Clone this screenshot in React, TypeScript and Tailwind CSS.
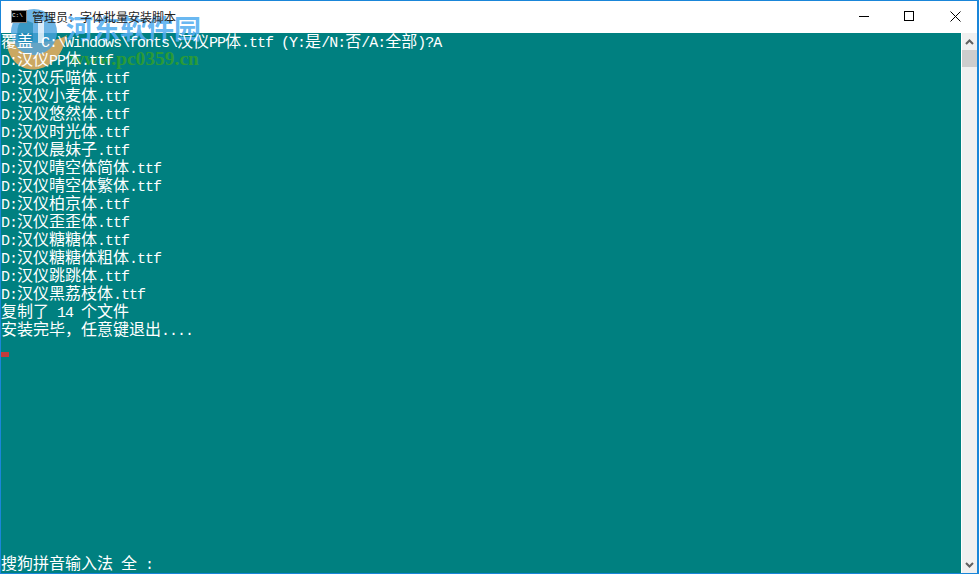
const lines = [
  "覆盖 C:\\Windows\\fonts\\汉仪PP体.ttf (Y:是/N:否/A:全部)?A",
  "D:汉仪PP体.ttf",
  "D:汉仪乐喵体.ttf",
  "D:汉仪小麦体.ttf",
  "D:汉仪悠然体.ttf",
  "D:汉仪时光体.ttf",
  "D:汉仪晨妹子.ttf",
  "D:汉仪晴空体简体.ttf",
  "D:汉仪晴空体繁体.ttf",
  "D:汉仪柏京体.ttf",
  "D:汉仪歪歪体.ttf",
  "D:汉仪糖糖体.ttf",
  "D:汉仪糖糖体粗体.ttf",
  "D:汉仪跳跳体.ttf",
  "D:汉仪黑荔枝体.ttf",
  "复制了 14 个文件",
  "安装完毕\uFF0C任意键退出....",
];

// console cells: latin is 8px wide, cjk 16px, so they need different font sizes
function ConsoleText({ text }: { text: string }) {
  const parts = text.match(/[\u2E80-\uFFEF]+|[^\u2E80-\uFFEF]+/g) ?? [];
  return (
    <>
      {parts.map((part, i) =>
        /[\u2E80-\uFFEF]/.test(part) ? (
          <span key={i} className="text-[16px] font-['Noto_Sans_CJK_SC',monospace]">{part}</span>
        ) : (
          <span key={i} className="text-[15px] tracking-[-1px]">{part}</span>
        )
      )}
    </>
  );
}

// sits above the backgrounds but below the console text
function Watermark() {
  return (
    <div className="absolute left-0 top-0 z-[1] pointer-events-none">
      <svg width="70" height="72" viewBox="0 0 70 72" className="absolute left-0 top-0">
        <path d="M6 40 C6 76 56 82 66 34 C56 42 20 44 6 40Z" fill="#cba862" />
        <circle cx="33" cy="31" r="23" fill="#4aa3df" opacity="0.8" />
        <path d="M22 18 A17 17 0 0 0 24 45 L32 40 L32 22Z" fill="#0f7fa8" opacity="0.55" />
        <path d="M37 20 h6 v22 h-6z" fill="#ffffff" opacity="0.75" />
      </svg>
      <span className="absolute left-[65px] top-[10px] whitespace-nowrap text-[27px] leading-[34px] font-bold text-[#55aef0]/90 font-['Noto_Sans_CJK_SC',sans-serif]">河东软件园</span>
      <span className="absolute left-[69px] top-[46px] whitespace-nowrap text-[19.5px] leading-[24px] font-bold text-[#2a9a38] font-['Liberation_Serif',serif]">www.pc0359.cn</span>
    </div>
  );
}

export default function App() {
  return (
    <div className="relative flex h-[574px] w-[979px] flex-col overflow-hidden border-t border-l border-b border-r-2 border-[#1a86d9] bg-white">
      <div className="flex h-[32px] shrink-0 items-center bg-white">
        <div className="relative z-10 ml-[10px] mr-[5px] mb-[1px] flex h-[13px] w-[16px] items-start border border-[#8a8a8a] bg-black">
          <span className="text-[6px] leading-[10px] text-white font-['Liberation_Mono',monospace]">C:\</span>
        </div>
        <span className="relative z-10 text-[12px] text-[#222] font-['Noto_Sans_CJK_SC',sans-serif]">管理员{"\uFF1A"}字体批量安装脚本</span>
        <div className="ml-auto flex h-full items-center pb-[2px]">
          <div className="flex h-full w-[46px] items-center justify-center">
            <div className="h-px w-[10px] bg-black" />
          </div>
          <div className="flex h-full w-[46px] items-center justify-center pr-[2px]">
            <div className="h-[10px] w-[10px] border border-black" />
          </div>
          <div className="flex h-full w-[44px] items-center justify-center">
            <svg width="11" height="11" viewBox="0 0 11 11" fill="none" stroke="black"><path d="M0.5 0.5 L10.5 10.5 M10.5 0.5 L0.5 10.5" /></svg>
          </div>
        </div>
      </div>
      <div className="flex min-h-0 flex-1">
        <div className="relative flex-1 bg-[#008080] text-white font-['Liberation_Mono',monospace]">
          {lines.map((line) => (
            <div key={line} className="relative z-10 h-[18px] whitespace-pre leading-[14px]">
              <ConsoleText text={line} />
            </div>
          ))}
          <div className="mt-[13px] h-[5px] w-[8px] bg-[#c23b3b]" />
          <div className="absolute bottom-0 left-0 h-[18px] whitespace-pre leading-[14px]">
            <ConsoleText text="搜狗拼音输入法 全 :" />
          </div>
        </div>
        <div className="ml-px flex w-[15px] shrink-0 flex-col bg-[#f0f0f0]">
          <div className="flex h-[17px] items-center justify-center">
            <svg width="9" height="6" viewBox="0 0 9 6" fill="none" stroke="#606060" strokeWidth="2"><path d="M1 5 L4.5 1.5 L8 5" /></svg>
          </div>
          <div className="h-[17px] bg-[#cdcdcd]" />
          <div className="mt-auto flex h-[17px] items-center justify-center">
            <svg width="9" height="6" viewBox="0 0 9 6" fill="none" stroke="#606060" strokeWidth="2"><path d="M1 1 L4.5 4.5 L8 1" /></svg>
          </div>
        </div>
      </div>
      <Watermark />
    </div>
  );
}
